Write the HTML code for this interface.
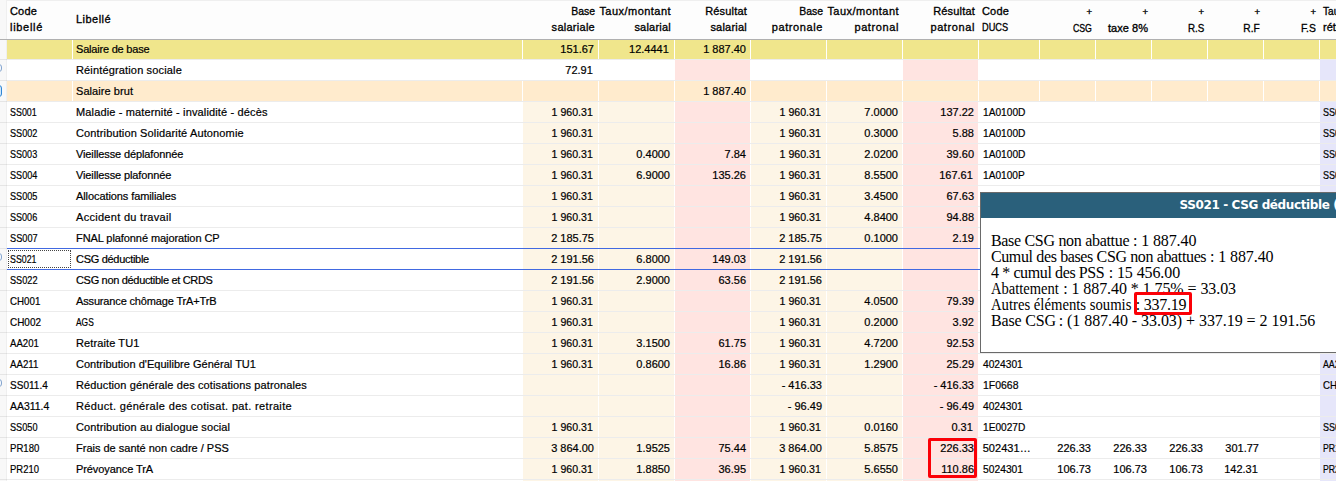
<!DOCTYPE html>
<html lang="fr"><head><meta charset="utf-8"><title>Bulletin de paie</title>
<style>
html,body{margin:0;padding:0;background:#fff;}
body{width:1336px;height:481px;position:relative;overflow:hidden;font-family:"Liberation Sans",sans-serif;font-size:11px;color:#000;}
#g{position:absolute;left:0;top:0;width:1336px;height:481px;overflow:hidden;}
.hd{position:absolute;left:0;top:0;width:1336px;height:39px;background:#fdfdfd;border-top:1px solid #efefef;box-sizing:border-box;}
.hl{position:absolute;left:0;top:39px;width:1336px;height:1px;background:#b0b0b0;}
.lc{position:absolute;left:0;top:0;width:6px;height:481px;background:#f8f8f8;border-right:1px solid #efefef;}
.h{position:absolute;top:3px;line-height:16px;white-space:nowrap;color:#000;-webkit-text-stroke:0.32px #000;}
.pl{font-size:9.5px;}
.h.r{text-align:right;}
.f{display:inline-block;white-space:pre;}
.r{position:absolute;left:0;width:1336px;height:20px;}
.sep{position:absolute;left:0;width:1336px;height:1px;background:rgba(0,0,0,0.075);}
.c{-webkit-text-stroke:0.2px #000;position:absolute;top:0;height:20px;line-height:20px;white-space:nowrap;overflow:hidden;box-sizing:border-box;}
.c.n{text-align:right;padding-right:4px;}
.c.t{padding-left:3px;}
.sel{position:absolute;left:7px;width:1329px;height:1px;background:#4169e1;}
.foc{position:absolute;left:8px;top:250px;width:63px;height:18px;border:1px dotted #444;box-sizing:border-box;}
.ic{position:absolute;box-sizing:border-box;}
.red{position:absolute;border:3px solid #fb0007;border-radius:2px;box-sizing:border-box;}
#tip{position:absolute;left:980px;top:192px;width:420px;height:161px;border:1px solid #6a6a6a;box-sizing:border-box;background:#fff;}
#tip .th{position:absolute;left:0;top:0;width:100%;height:25px;background:#2a607b;color:#fff;font-family:"DejaVu Sans","Liberation Sans",sans-serif;font-weight:bold;font-size:12px;line-height:25px;white-space:nowrap;}
#tip .th>span{position:absolute;left:198.5px;top:0;letter-spacing:-0.39px;}
#tip .tb{position:absolute;left:0;top:0;font-family:"Liberation Serif",serif;font-size:16px;line-height:16px;color:#000;white-space:nowrap;}
#tip .tl{position:absolute;left:0;height:16px;}
#tip .sa{position:absolute;top:0;white-space:pre;}
</style></head><body><div id="g">
<div class="hd"></div><div class="lc"></div>

<div class="h" style="left:10px"><span class="f" style="letter-spacing:0.157px;">Code</span><br><span class="f" style="letter-spacing:0.705px;">libellé</span></div>
<div class="h" style="left:76px;top:11px"><span class="f" style="letter-spacing:0.464px;">Libellé</span></div>
<div class="h r" style="left:503px;width:92px"><span class="f" style="transform:scaleX(0.9490);transform-origin:right center;">Base</span><br><span class="f" style="letter-spacing:0.268px;">salariale</span></div>
<div class="h r" style="left:579px;width:92px"><span class="f" style="letter-spacing:0.462px;">Taux/montant</span><br><span class="f" style="letter-spacing:0.222px;">salarial</span></div>
<div class="h r" style="left:655px;width:92px"><span class="f" style="letter-spacing:0.183px;">Résultat</span><br><span class="f" style="letter-spacing:0.222px;">salarial</span></div>
<div class="h r" style="left:731px;width:92px"><span class="f" style="transform:scaleX(0.9490);transform-origin:right center;">Base</span><br><span class="f" style="letter-spacing:0.597px;">patronale</span></div>
<div class="h r" style="left:807px;width:92px"><span class="f" style="letter-spacing:0.462px;">Taux/montant</span><br><span class="f" style="letter-spacing:0.605px;">patronal</span></div>
<div class="h r" style="left:883px;width:92px"><span class="f" style="letter-spacing:0.183px;">Résultat</span><br><span class="f" style="letter-spacing:0.605px;">patronal</span></div>
<div class="h" style="left:982px"><span class="f" style="letter-spacing:0.157px;">Code</span><br><span class="f" style="transform:scaleX(0.8347);transform-origin:left center;">DUCS</span></div>
<div class="h r" style="left:1020px;width:72px"><span class="pl">+</span><br><span class="f" style="transform:scaleX(0.7953);transform-origin:right center;">CSG</span></div>
<div class="h r" style="left:1076px;width:72px"><span class="pl">+</span><br><span class="f" style="letter-spacing:0.042px;">taxe 8%</span></div>
<div class="h r" style="left:1132px;width:72px"><span class="pl">+</span><br><span class="f" style="transform:scaleX(0.8892);transform-origin:right center;">R.S</span></div>
<div class="h r" style="left:1188px;width:72px"><span class="pl">+</span><br><span class="f" style="transform:scaleX(0.9250);transform-origin:right center;">R.F</span></div>
<div class="h r" style="left:1244px;width:72px"><span class="pl">+</span><br><span class="f" style="transform:scaleX(0.9417);transform-origin:right center;">F.S</span></div>
<div class="h" style="left:1323px"><span class="f" style="transform:scaleX(0.9200);transform-origin:left center;">Taux</span><br><span class="f">rétro</span></div>
<div class="hl"></div>
<div class="r" style="top:40px"><span class="c t" style="left:7px;width:65px;background:#f0e68c;height:19px;line-height:18px;"></span><span class="c t" style="left:73px;width:449px;background:#f0e68c;height:19px;line-height:18px;"><span class="f" style="letter-spacing:-0.205px;">Salaire de base</span></span><span class="c n" style="left:523px;width:75px;background:#f0e68c;height:19px;line-height:18px;"><span class="f">151.67</span></span><span class="c n" style="left:599px;width:75px;background:#f0e68c;height:19px;line-height:18px;"><span class="f" style="position:relative;left:-1.2px;">12.4441</span></span><span class="c n" style="left:675px;width:75px;background:#f0e68c;height:19px;line-height:18px;"><span class="f">1 887.40</span></span><span class="c n" style="left:751px;width:75px;background:#f0e68c;height:19px;line-height:18px;"></span><span class="c n" style="left:827px;width:75px;background:#f0e68c;height:19px;line-height:18px;"></span><span class="c n" style="left:903px;width:75px;background:#f0e68c;height:19px;line-height:18px;"></span><span class="c t" style="left:979px;width:60px;background:#f0e68c;height:19px;line-height:18px;padding-left:3.7px;"></span><span class="c n" style="left:1040px;width:55px;background:#f0e68c;height:19px;line-height:18px;"></span><span class="c n" style="left:1096px;width:55px;background:#f0e68c;height:19px;line-height:18px;"></span><span class="c n" style="left:1152px;width:55px;background:#f0e68c;height:19px;line-height:18px;"></span><span class="c n" style="left:1208px;width:55px;background:#f0e68c;height:19px;line-height:18px;"></span><span class="c n" style="left:1264px;width:55px;background:#f0e68c;height:19px;line-height:18px;"></span><span class="c t" style="left:1320px;width:16px;background:#f0e68c;height:19px;line-height:18px;"></span></div>
<div class="sep" style="top:59px"></div>
<div class="r" style="top:60px"><span class="c t" style="left:73px;width:449px;"><span class="f" style="letter-spacing:0.152px;">Réintégration sociale</span></span><span class="c n" style="left:523px;width:75px;"><span class="f" style="position:relative;left:-1.2px;">72.91</span></span><span class="c n" style="left:675px;width:75px;background:#ffe4e1;"></span><span class="c n" style="left:903px;width:75px;background:#ffe4e1;"></span><span class="c t" style="left:1320px;width:16px;background:#e6e6fa;"></span></div>
<div class="sep" style="top:80px"></div>
<div class="r" style="top:81px"><span class="c t" style="left:7px;width:65px;background:#ffebcd;"></span><span class="c t" style="left:73px;width:449px;background:#ffebcd;"><span class="f" style="letter-spacing:0.066px;">Salaire brut</span></span><span class="c n" style="left:523px;width:75px;background:#ffebcd;"></span><span class="c n" style="left:599px;width:75px;background:#ffebcd;"></span><span class="c n" style="left:675px;width:75px;background:#ffebcd;"><span class="f">1 887.40</span></span><span class="c n" style="left:751px;width:75px;background:#ffebcd;"></span><span class="c n" style="left:827px;width:75px;background:#ffebcd;"></span><span class="c n" style="left:903px;width:75px;background:#ffebcd;"></span><span class="c t" style="left:979px;width:60px;background:#ffebcd;padding-left:3.7px;"></span><span class="c n" style="left:1040px;width:55px;background:#ffebcd;"></span><span class="c n" style="left:1096px;width:55px;background:#ffebcd;"></span><span class="c n" style="left:1152px;width:55px;background:#ffebcd;"></span><span class="c n" style="left:1208px;width:55px;background:#ffebcd;"></span><span class="c n" style="left:1264px;width:55px;background:#ffebcd;"></span><span class="c t" style="left:1320px;width:16px;background:#ffebcd;"></span></div>
<div class="sep" style="top:101px"></div>
<div class="r" style="top:102px"><span class="c t" style="left:7px;width:65px;"><span class="f" style="transform:scaleX(0.8096);transform-origin:left center;">SS001</span></span><span class="c t" style="left:73px;width:449px;"><span class="f" style="letter-spacing:0.144px;">Maladie - maternité - invalidité - décès</span></span><span class="c n" style="left:523px;width:75px;background:#fdf5e6;"><span class="f" style="transform:scaleX(0.9627);transform-origin:right center;position:relative;left:-1.2px;">1 960.31</span></span><span class="c n" style="left:599px;width:75px;background:#fdf5e6;"></span><span class="c n" style="left:675px;width:75px;background:#ffe4e1;"></span><span class="c n" style="left:751px;width:75px;background:#fdf5e6;"><span class="f" style="transform:scaleX(0.9627);transform-origin:right center;position:relative;left:-1.2px;">1 960.31</span></span><span class="c n" style="left:827px;width:75px;background:#fdf5e6;"><span class="f">7.0000</span></span><span class="c n" style="left:903px;width:75px;background:#ffe4e1;"><span class="f">137.22</span></span><span class="c t" style="left:979px;width:60px;padding-left:3.7px;"><span class="f" style="transform:scaleX(0.9253);transform-origin:left center;">1A0100D</span></span><span class="c t" style="left:1320px;width:16px;background:#e6e6fa;"><span class="f" style="transform:scaleX(0.8200);transform-origin:left center;">SS0</span></span></div>
<div class="sep" style="top:122px"></div>
<div class="r" style="top:123px"><span class="c t" style="left:7px;width:65px;"><span class="f" style="transform:scaleX(0.8310);transform-origin:left center;">SS002</span></span><span class="c t" style="left:73px;width:449px;"><span class="f" style="letter-spacing:0.135px;">Contribution Solidarité Autonomie</span></span><span class="c n" style="left:523px;width:75px;background:#fdf5e6;"><span class="f" style="transform:scaleX(0.9627);transform-origin:right center;position:relative;left:-1.2px;">1 960.31</span></span><span class="c n" style="left:599px;width:75px;background:#fdf5e6;"></span><span class="c n" style="left:675px;width:75px;background:#ffe4e1;"></span><span class="c n" style="left:751px;width:75px;background:#fdf5e6;"><span class="f" style="transform:scaleX(0.9627);transform-origin:right center;position:relative;left:-1.2px;">1 960.31</span></span><span class="c n" style="left:827px;width:75px;background:#fdf5e6;"><span class="f">0.3000</span></span><span class="c n" style="left:903px;width:75px;background:#ffe4e1;"><span class="f">5.88</span></span><span class="c t" style="left:979px;width:60px;padding-left:3.7px;"><span class="f" style="transform:scaleX(0.9253);transform-origin:left center;">1A0100D</span></span><span class="c t" style="left:1320px;width:16px;background:#e6e6fa;"><span class="f" style="transform:scaleX(0.8200);transform-origin:left center;">SS0</span></span></div>
<div class="sep" style="top:143px"></div>
<div class="r" style="top:144px"><span class="c t" style="left:7px;width:65px;"><span class="f" style="transform:scaleX(0.8235);transform-origin:left center;">SS003</span></span><span class="c t" style="left:73px;width:449px;"><span class="f" style="letter-spacing:-0.123px;">Vieillesse déplafonnée</span></span><span class="c n" style="left:523px;width:75px;background:#fdf5e6;"><span class="f" style="transform:scaleX(0.9627);transform-origin:right center;position:relative;left:-1.2px;">1 960.31</span></span><span class="c n" style="left:599px;width:75px;background:#fdf5e6;"><span class="f">0.4000</span></span><span class="c n" style="left:675px;width:75px;background:#ffe4e1;"><span class="f">7.84</span></span><span class="c n" style="left:751px;width:75px;background:#fdf5e6;"><span class="f" style="transform:scaleX(0.9627);transform-origin:right center;position:relative;left:-1.2px;">1 960.31</span></span><span class="c n" style="left:827px;width:75px;background:#fdf5e6;"><span class="f">2.0200</span></span><span class="c n" style="left:903px;width:75px;background:#ffe4e1;"><span class="f">39.60</span></span><span class="c t" style="left:979px;width:60px;padding-left:3.7px;"><span class="f" style="transform:scaleX(0.9253);transform-origin:left center;">1A0100D</span></span><span class="c t" style="left:1320px;width:16px;background:#e6e6fa;"><span class="f" style="transform:scaleX(0.8200);transform-origin:left center;">SS0</span></span></div>
<div class="sep" style="top:164px"></div>
<div class="r" style="top:165px"><span class="c t" style="left:7px;width:65px;"><span class="f" style="transform:scaleX(0.8276);transform-origin:left center;">SS004</span></span><span class="c t" style="left:73px;width:449px;"><span class="f" style="letter-spacing:-0.121px;">Vieillesse plafonnée</span></span><span class="c n" style="left:523px;width:75px;background:#fdf5e6;"><span class="f" style="transform:scaleX(0.9627);transform-origin:right center;position:relative;left:-1.2px;">1 960.31</span></span><span class="c n" style="left:599px;width:75px;background:#fdf5e6;"><span class="f">6.9000</span></span><span class="c n" style="left:675px;width:75px;background:#ffe4e1;"><span class="f">135.26</span></span><span class="c n" style="left:751px;width:75px;background:#fdf5e6;"><span class="f" style="transform:scaleX(0.9627);transform-origin:right center;position:relative;left:-1.2px;">1 960.31</span></span><span class="c n" style="left:827px;width:75px;background:#fdf5e6;"><span class="f">8.5500</span></span><span class="c n" style="left:903px;width:75px;background:#ffe4e1;"><span class="f" style="position:relative;left:-1.2px;">167.61</span></span><span class="c t" style="left:979px;width:60px;padding-left:3.7px;"><span class="f" style="transform:scaleX(0.9226);transform-origin:left center;">1A0100P</span></span><span class="c t" style="left:1320px;width:16px;background:#e6e6fa;"><span class="f" style="transform:scaleX(0.8200);transform-origin:left center;">SS0</span></span></div>
<div class="sep" style="top:185px"></div>
<div class="r" style="top:186px"><span class="c t" style="left:7px;width:65px;"><span class="f" style="transform:scaleX(0.8297);transform-origin:left center;">SS005</span></span><span class="c t" style="left:73px;width:449px;"><span class="f" style="letter-spacing:-0.089px;">Allocations familiales</span></span><span class="c n" style="left:523px;width:75px;background:#fdf5e6;"><span class="f" style="transform:scaleX(0.9627);transform-origin:right center;position:relative;left:-1.2px;">1 960.31</span></span><span class="c n" style="left:599px;width:75px;background:#fdf5e6;"></span><span class="c n" style="left:675px;width:75px;background:#ffe4e1;"></span><span class="c n" style="left:751px;width:75px;background:#fdf5e6;"><span class="f" style="transform:scaleX(0.9627);transform-origin:right center;position:relative;left:-1.2px;">1 960.31</span></span><span class="c n" style="left:827px;width:75px;background:#fdf5e6;"><span class="f">3.4500</span></span><span class="c n" style="left:903px;width:75px;background:#ffe4e1;"><span class="f">67.63</span></span><span class="c t" style="left:1320px;width:16px;background:#e6e6fa;"></span></div>
<div class="sep" style="top:206px"></div>
<div class="r" style="top:207px"><span class="c t" style="left:7px;width:65px;"><span class="f" style="transform:scaleX(0.8235);transform-origin:left center;">SS006</span></span><span class="c t" style="left:73px;width:449px;"><span class="f" style="letter-spacing:0.294px;">Accident du travail</span></span><span class="c n" style="left:523px;width:75px;background:#fdf5e6;"><span class="f" style="transform:scaleX(0.9627);transform-origin:right center;position:relative;left:-1.2px;">1 960.31</span></span><span class="c n" style="left:599px;width:75px;background:#fdf5e6;"></span><span class="c n" style="left:675px;width:75px;background:#ffe4e1;"></span><span class="c n" style="left:751px;width:75px;background:#fdf5e6;"><span class="f" style="transform:scaleX(0.9627);transform-origin:right center;position:relative;left:-1.2px;">1 960.31</span></span><span class="c n" style="left:827px;width:75px;background:#fdf5e6;"><span class="f">4.8400</span></span><span class="c n" style="left:903px;width:75px;background:#ffe4e1;"><span class="f">94.88</span></span><span class="c t" style="left:1320px;width:16px;background:#e6e6fa;"></span></div>
<div class="sep" style="top:227px"></div>
<div class="r" style="top:228px"><span class="c t" style="left:7px;width:65px;"><span class="f" style="transform:scaleX(0.8375);transform-origin:left center;">SS007</span></span><span class="c t" style="left:73px;width:449px;"><span class="f" style="letter-spacing:-0.081px;">FNAL plafonné majoration CP</span></span><span class="c n" style="left:523px;width:75px;background:#fdf5e6;"><span class="f">2 185.75</span></span><span class="c n" style="left:599px;width:75px;background:#fdf5e6;"></span><span class="c n" style="left:675px;width:75px;background:#ffe4e1;"></span><span class="c n" style="left:751px;width:75px;background:#fdf5e6;"><span class="f">2 185.75</span></span><span class="c n" style="left:827px;width:75px;background:#fdf5e6;"><span class="f">0.1000</span></span><span class="c n" style="left:903px;width:75px;background:#ffe4e1;"><span class="f">2.19</span></span><span class="c t" style="left:1320px;width:16px;background:#e6e6fa;"></span></div>
<div class="sep" style="top:248px;width:7px"></div><div class="sel" style="top:248px"></div>
<div class="r" style="top:249px"><span class="c t" style="left:7px;width:65px;"><span class="f" style="transform:scaleX(0.8022);transform-origin:left center;">SS021</span></span><span class="c t" style="left:73px;width:449px;"><span class="f" style="letter-spacing:-0.295px;">CSG déductible</span></span><span class="c n" style="left:523px;width:75px;background:#fdf5e6;"><span class="f">2 191.56</span></span><span class="c n" style="left:599px;width:75px;background:#fdf5e6;"><span class="f">6.8000</span></span><span class="c n" style="left:675px;width:75px;background:#ffe4e1;"><span class="f">149.03</span></span><span class="c n" style="left:751px;width:75px;background:#fdf5e6;"><span class="f">2 191.56</span></span><span class="c n" style="left:827px;width:75px;background:#fdf5e6;"></span><span class="c n" style="left:903px;width:75px;background:#ffe4e1;"></span><span class="c t" style="left:1320px;width:16px;background:#e6e6fa;"></span></div>
<div class="sep" style="top:269px;width:7px"></div><div class="sel" style="top:269px"></div>
<div class="r" style="top:270px"><span class="c t" style="left:7px;width:65px;"><span class="f" style="transform:scaleX(0.8341);transform-origin:left center;">SS022</span></span><span class="c t" style="left:73px;width:449px;"><span class="f" style="letter-spacing:-0.320px;">CSG non déductible et CRDS</span></span><span class="c n" style="left:523px;width:75px;background:#fdf5e6;"><span class="f">2 191.56</span></span><span class="c n" style="left:599px;width:75px;background:#fdf5e6;"><span class="f">2.9000</span></span><span class="c n" style="left:675px;width:75px;background:#ffe4e1;"><span class="f">63.56</span></span><span class="c n" style="left:751px;width:75px;background:#fdf5e6;"><span class="f">2 191.56</span></span><span class="c n" style="left:827px;width:75px;background:#fdf5e6;"></span><span class="c n" style="left:903px;width:75px;background:#ffe4e1;"></span><span class="c t" style="left:1320px;width:16px;background:#e6e6fa;"></span></div>
<div class="sep" style="top:290px"></div>
<div class="r" style="top:291px"><span class="c t" style="left:7px;width:65px;"><span class="f" style="transform:scaleX(0.8868);transform-origin:left center;">CH001</span></span><span class="c t" style="left:73px;width:449px;"><span class="f" style="letter-spacing:-0.153px;">Assurance chômage TrA+TrB</span></span><span class="c n" style="left:523px;width:75px;background:#fdf5e6;"><span class="f" style="transform:scaleX(0.9627);transform-origin:right center;position:relative;left:-1.2px;">1 960.31</span></span><span class="c n" style="left:599px;width:75px;background:#fdf5e6;"></span><span class="c n" style="left:675px;width:75px;background:#ffe4e1;"></span><span class="c n" style="left:751px;width:75px;background:#fdf5e6;"><span class="f" style="transform:scaleX(0.9627);transform-origin:right center;position:relative;left:-1.2px;">1 960.31</span></span><span class="c n" style="left:827px;width:75px;background:#fdf5e6;"><span class="f">4.0500</span></span><span class="c n" style="left:903px;width:75px;background:#ffe4e1;"><span class="f">79.39</span></span><span class="c t" style="left:1320px;width:16px;background:#e6e6fa;"></span></div>
<div class="sep" style="top:311px"></div>
<div class="r" style="top:312px"><span class="c t" style="left:7px;width:65px;"><span class="f" style="transform:scaleX(0.9036);transform-origin:left center;">CH002</span></span><span class="c t" style="left:73px;width:449px;"><span class="f" style="transform:scaleX(0.7644);transform-origin:left center;">AGS</span></span><span class="c n" style="left:523px;width:75px;background:#fdf5e6;"><span class="f" style="transform:scaleX(0.9627);transform-origin:right center;position:relative;left:-1.2px;">1 960.31</span></span><span class="c n" style="left:599px;width:75px;background:#fdf5e6;"></span><span class="c n" style="left:675px;width:75px;background:#ffe4e1;"></span><span class="c n" style="left:751px;width:75px;background:#fdf5e6;"><span class="f" style="transform:scaleX(0.9627);transform-origin:right center;position:relative;left:-1.2px;">1 960.31</span></span><span class="c n" style="left:827px;width:75px;background:#fdf5e6;"><span class="f">0.2000</span></span><span class="c n" style="left:903px;width:75px;background:#ffe4e1;"><span class="f">3.92</span></span><span class="c t" style="left:1320px;width:16px;background:#e6e6fa;"></span></div>
<div class="sep" style="top:332px"></div>
<div class="r" style="top:333px"><span class="c t" style="left:7px;width:65px;"><span class="f" style="transform:scaleX(0.8726);transform-origin:left center;">AA201</span></span><span class="c t" style="left:73px;width:449px;"><span class="f" style="letter-spacing:0.110px;">Retraite TU1</span></span><span class="c n" style="left:523px;width:75px;background:#fdf5e6;"><span class="f" style="transform:scaleX(0.9627);transform-origin:right center;position:relative;left:-1.2px;">1 960.31</span></span><span class="c n" style="left:599px;width:75px;background:#fdf5e6;"><span class="f">3.1500</span></span><span class="c n" style="left:675px;width:75px;background:#ffe4e1;"><span class="f">61.75</span></span><span class="c n" style="left:751px;width:75px;background:#fdf5e6;"><span class="f" style="transform:scaleX(0.9627);transform-origin:right center;position:relative;left:-1.2px;">1 960.31</span></span><span class="c n" style="left:827px;width:75px;background:#fdf5e6;"><span class="f">4.7200</span></span><span class="c n" style="left:903px;width:75px;background:#ffe4e1;"><span class="f">92.53</span></span><span class="c t" style="left:1320px;width:16px;background:#e6e6fa;"></span></div>
<div class="sep" style="top:353px"></div>
<div class="r" style="top:354px"><span class="c t" style="left:7px;width:65px;"><span class="f" style="transform:scaleX(0.8816);transform-origin:left center;">AA211</span></span><span class="c t" style="left:73px;width:449px;"><span class="f" style="letter-spacing:0.021px;">Contribution d'Equilibre Général TU1</span></span><span class="c n" style="left:523px;width:75px;background:#fdf5e6;"><span class="f" style="transform:scaleX(0.9627);transform-origin:right center;position:relative;left:-1.2px;">1 960.31</span></span><span class="c n" style="left:599px;width:75px;background:#fdf5e6;"><span class="f">0.8600</span></span><span class="c n" style="left:675px;width:75px;background:#ffe4e1;"><span class="f">16.86</span></span><span class="c n" style="left:751px;width:75px;background:#fdf5e6;"><span class="f" style="transform:scaleX(0.9627);transform-origin:right center;position:relative;left:-1.2px;">1 960.31</span></span><span class="c n" style="left:827px;width:75px;background:#fdf5e6;"><span class="f">1.2900</span></span><span class="c n" style="left:903px;width:75px;background:#ffe4e1;"><span class="f">25.29</span></span><span class="c t" style="left:979px;width:60px;padding-left:3.7px;"><span class="f" style="transform:scaleX(0.9292);transform-origin:left center;">4024301</span></span><span class="c t" style="left:1320px;width:16px;background:#e6e6fa;"><span class="f" style="transform:scaleX(0.8000);transform-origin:left center;">AA2</span></span></div>
<div class="sep" style="top:374px"></div>
<div class="r" style="top:375px"><span class="c t" style="left:7px;width:65px;"><span class="f" style="transform:scaleX(0.9121);transform-origin:left center;">SS011.4</span></span><span class="c t" style="left:73px;width:449px;"><span class="f" style="letter-spacing:0.117px;">Réduction générale des cotisations patronales</span></span><span class="c n" style="left:523px;width:75px;background:#fdf5e6;"></span><span class="c n" style="left:599px;width:75px;background:#fdf5e6;"></span><span class="c n" style="left:675px;width:75px;background:#ffe4e1;"></span><span class="c n" style="left:751px;width:75px;background:#fdf5e6;"><span class="f">- 416.33</span></span><span class="c n" style="left:827px;width:75px;background:#fdf5e6;"></span><span class="c n" style="left:903px;width:75px;background:#ffe4e1;"><span class="f">- 416.33</span></span><span class="c t" style="left:979px;width:60px;padding-left:3.7px;"><span class="f" style="transform:scaleX(0.9513);transform-origin:left center;">1F0668</span></span><span class="c t" style="left:1320px;width:16px;background:#e6e6fa;"><span class="f" style="transform:scaleX(0.8800);transform-origin:left center;">CH0</span></span></div>
<div class="sep" style="top:395px"></div>
<div class="r" style="top:396px"><span class="c t" style="left:7px;width:65px;"><span class="f" style="transform:scaleX(0.9494);transform-origin:left center;">AA311.4</span></span><span class="c t" style="left:73px;width:449px;"><span class="f" style="letter-spacing:0.345px;">Réduct. générale des cotisat. pat. retraite</span></span><span class="c n" style="left:523px;width:75px;background:#fdf5e6;"></span><span class="c n" style="left:599px;width:75px;background:#fdf5e6;"></span><span class="c n" style="left:675px;width:75px;background:#ffe4e1;"></span><span class="c n" style="left:751px;width:75px;background:#fdf5e6;"><span class="f">- 96.49</span></span><span class="c n" style="left:827px;width:75px;background:#fdf5e6;"></span><span class="c n" style="left:903px;width:75px;background:#ffe4e1;"><span class="f">- 96.49</span></span><span class="c t" style="left:979px;width:60px;padding-left:3.7px;"><span class="f" style="transform:scaleX(0.9292);transform-origin:left center;">4024301</span></span><span class="c t" style="left:1320px;width:16px;background:#e6e6fa;"></span></div>
<div class="sep" style="top:416px"></div>
<div class="r" style="top:417px"><span class="c t" style="left:7px;width:65px;"><span class="f" style="transform:scaleX(0.8319);transform-origin:left center;">SS050</span></span><span class="c t" style="left:73px;width:449px;"><span class="f" style="letter-spacing:0.120px;">Contribution au dialogue social</span></span><span class="c n" style="left:523px;width:75px;background:#fdf5e6;"><span class="f" style="transform:scaleX(0.9627);transform-origin:right center;position:relative;left:-1.2px;">1 960.31</span></span><span class="c n" style="left:599px;width:75px;background:#fdf5e6;"></span><span class="c n" style="left:675px;width:75px;background:#ffe4e1;"></span><span class="c n" style="left:751px;width:75px;background:#fdf5e6;"><span class="f" style="transform:scaleX(0.9627);transform-origin:right center;position:relative;left:-1.2px;">1 960.31</span></span><span class="c n" style="left:827px;width:75px;background:#fdf5e6;"><span class="f">0.0160</span></span><span class="c n" style="left:903px;width:75px;background:#ffe4e1;"><span class="f" style="position:relative;left:-1.2px;">0.31</span></span><span class="c t" style="left:979px;width:60px;padding-left:3.7px;"><span class="f" style="transform:scaleX(0.9213);transform-origin:left center;">1E0027D</span></span><span class="c t" style="left:1320px;width:16px;background:#e6e6fa;"><span class="f" style="transform:scaleX(0.8200);transform-origin:left center;">SS0</span></span></div>
<div class="sep" style="top:437px"></div>
<div class="r" style="top:438px"><span class="c t" style="left:7px;width:65px;"><span class="f" style="transform:scaleX(0.8714);transform-origin:left center;">PR180</span></span><span class="c t" style="left:73px;width:449px;"><span class="f">Frais de santé non cadre / PSS</span></span><span class="c n" style="left:523px;width:75px;background:#fdf5e6;"><span class="f">3 864.00</span></span><span class="c n" style="left:599px;width:75px;background:#fdf5e6;"><span class="f">1.9525</span></span><span class="c n" style="left:675px;width:75px;background:#ffe4e1;"><span class="f">75.44</span></span><span class="c n" style="left:751px;width:75px;background:#fdf5e6;"><span class="f">3 864.00</span></span><span class="c n" style="left:827px;width:75px;background:#fdf5e6;"><span class="f">5.8575</span></span><span class="c n" style="left:903px;width:75px;background:#ffe4e1;"><span class="f">226.33</span></span><span class="c t" style="left:979px;width:60px;padding-left:3.7px;"><span class="f" style="letter-spacing:0.050px;">502431…</span></span><span class="c n" style="left:1040px;width:55px;"><span class="f">226.33</span></span><span class="c n" style="left:1096px;width:55px;"><span class="f">226.33</span></span><span class="c n" style="left:1152px;width:55px;"><span class="f">226.33</span></span><span class="c n" style="left:1208px;width:55px;"><span class="f">301.77</span></span><span class="c t" style="left:1320px;width:16px;background:#e6e6fa;"><span class="f" style="transform:scaleX(0.7900);transform-origin:left center;">PR1</span></span></div>
<div class="sep" style="top:458px"></div>
<div class="r" style="top:459px"><span class="c t" style="left:7px;width:65px;"><span class="f" style="transform:scaleX(0.8595);transform-origin:left center;">PR210</span></span><span class="c t" style="left:73px;width:449px;"><span class="f" style="letter-spacing:-0.093px;">Prévoyance TrA</span></span><span class="c n" style="left:523px;width:75px;background:#fdf5e6;"><span class="f" style="transform:scaleX(0.9627);transform-origin:right center;position:relative;left:-1.2px;">1 960.31</span></span><span class="c n" style="left:599px;width:75px;background:#fdf5e6;"><span class="f">1.8850</span></span><span class="c n" style="left:675px;width:75px;background:#ffe4e1;"><span class="f">36.95</span></span><span class="c n" style="left:751px;width:75px;background:#fdf5e6;"><span class="f" style="transform:scaleX(0.9627);transform-origin:right center;position:relative;left:-1.2px;">1 960.31</span></span><span class="c n" style="left:827px;width:75px;background:#fdf5e6;"><span class="f">5.6550</span></span><span class="c n" style="left:903px;width:75px;background:#ffe4e1;"><span class="f">110.86</span></span><span class="c t" style="left:979px;width:60px;padding-left:3.7px;"><span class="f" style="transform:scaleX(0.9350);transform-origin:left center;">5024301</span></span><span class="c n" style="left:1040px;width:55px;"><span class="f">106.73</span></span><span class="c n" style="left:1096px;width:55px;"><span class="f">106.73</span></span><span class="c n" style="left:1152px;width:55px;"><span class="f">106.73</span></span><span class="c n" style="left:1208px;width:55px;"><span class="f" style="position:relative;left:-1.2px;">142.31</span></span><span class="c t" style="left:1320px;width:16px;background:#e6e6fa;"><span class="f" style="transform:scaleX(0.7900);transform-origin:left center;">PR2</span></span></div>
<div class="sep" style="top:479px"></div>
<div class="r" style="top:480px"><span class="c" style="left:523px;width:75px;background:#fdf5e6;"></span><span class="c" style="left:599px;width:75px;background:#fdf5e6;"></span><span class="c" style="left:675px;width:75px;background:#ffe4e1;"></span><span class="c" style="left:751px;width:75px;background:#fdf5e6;"></span><span class="c" style="left:827px;width:75px;background:#fdf5e6;"></span><span class="c" style="left:903px;width:75px;background:#ffe4e1;"></span><span class="c" style="left:1320px;width:16px;background:#e6e6fa;"></span></div>
<div class="foc"></div>
<div class="ic" style="left:-5.8px;top:64px;width:8px;height:8px;border:1px solid #86a6cf;border-radius:3px;background:#f4f8fd;"></div>
<div class="ic" style="left:-9px;top:85px;width:11px;height:12px;border:1px solid #2f86d6;border-radius:3px;background:#cfe6fa;"></div>
<div class="ic" style="left:-5.8px;top:253px;width:8px;height:8px;border:1px solid #86a6cf;border-radius:3px;background:#f4f8fd;"></div>
<div class="ic" style="left:-5.8px;top:379px;width:8px;height:8px;border:1px solid #86a6cf;border-radius:3px;background:#f4f8fd;"></div>
<div class="red" style="left:928px;top:438px;width:49px;height:40px;"></div>
<div id="tip"><div class="th"><span><span class="f">SS021 - CSG déductible (Base)</span></span></div><div class="tb"><div class="tl" style="top:40px"><span class="sa" style="left:9.95px"><span class="f" style="letter-spacing:-0.308px;">Base CSG non abattue</span></span><span class="sa" style="left:151.95px"><span class="f" style="letter-spacing:-0.111px;">: 1 887.40</span></span></div><div class="tl" style="top:56px"><span class="sa" style="left:9.95px"><span class="f" style="letter-spacing:-0.369px;">Cumul des bases CSG non abattues</span></span><span class="sa" style="left:228.95px"><span class="f" style="letter-spacing:-0.094px;">: 1 887.40</span></span></div><div class="tl" style="top:72px"><span class="sa" style="left:9.95px"><span class="f" style="letter-spacing:-0.387px;">4 * cumul des PSS</span></span><span class="sa" style="left:127.70px"><span class="f" style="letter-spacing:-0.100px;">: 15 456.00</span></span></div><div class="tl" style="top:88px"><span class="sa" style="left:9.95px"><span class="f" style="transform:scaleX(0.9090);transform-origin:left center;">Abattement</span></span><span class="sa" style="left:82.20px"><span class="f" style="letter-spacing:-0.076px;">: 1 887.40 * 1.75% = 33.03</span></span></div><div class="tl" style="top:104px"><span class="sa" style="left:9.95px"><span class="f" style="transform:scaleX(0.9184);transform-origin:left center;">Autres éléments soumis</span></span><span class="sa" style="left:154.70px"><span class="f" style="letter-spacing:-0.218px;">: 337.19</span></span></div><div class="tl" style="top:120px"><span class="sa" style="left:9.95px"><span class="f" style="letter-spacing:-0.150px;">Base CSG</span></span><span class="sa" style="left:77.70px"><span class="f" style="letter-spacing:-0.051px;">: (1 887.40 - 33.03) + 337.19 = 2 191.56</span></span></div></div></div>
<div class="red" style="left:1134px;top:292px;width:58px;height:23px;"></div>
</div></body></html>
